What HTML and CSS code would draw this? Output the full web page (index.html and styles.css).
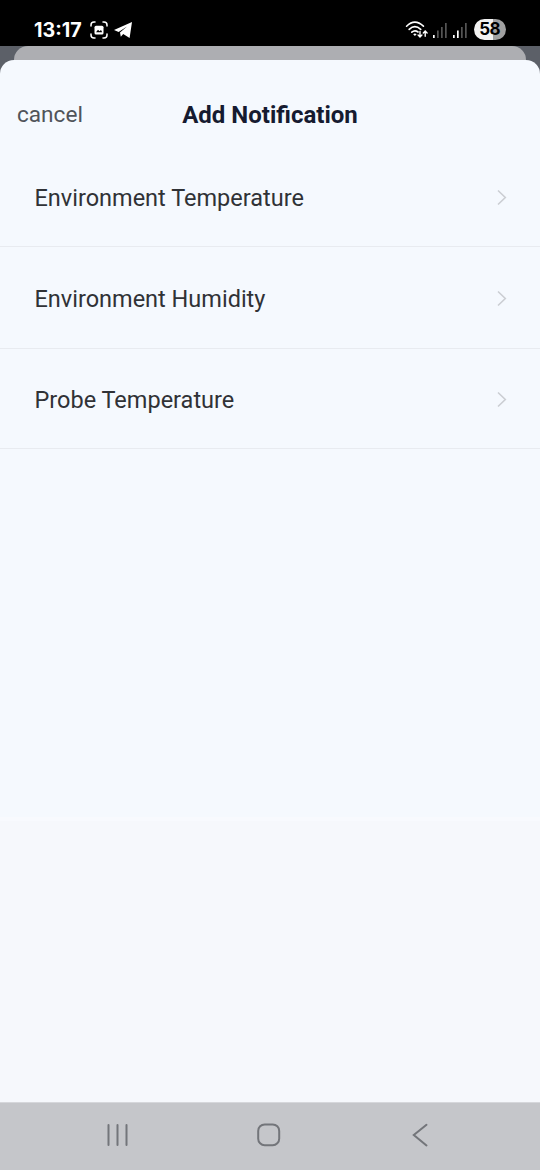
FILE: index.html
```html
<!DOCTYPE html>
<html lang="en">
<head>
    <meta charset="UTF-8">
    <meta name="viewport" content="width=device-width, initial-scale=1.0">
    <title>Add Notification</title>
    <link rel="stylesheet" href="styles.css">
</head>
<body>
    <!-- status bar -->
    <div class="status-bar">
        <span class="clock">13:17</span>
        <svg class="icon-capture" width="18" height="18" viewBox="0 0 18 18" fill="none" stroke="#fff" stroke-width="1.5" stroke-linecap="round">
            <path d="M1 5V4Q1 1 4 1H5M13 1H14Q17 1 17 4V5M17 13V14Q17 17 14 17H13M5 17H4Q1 17 1 14V13"/>
            <rect x="4.5" y="4.8" width="9" height="8.6" rx="1.5" fill="#fff" stroke="none"/>
            <path d="M6 11.2L8 8.8L9.5 10.2L11 8.9L12.2 11.2Z" fill="#000" stroke="none"/>
        </svg>
        <svg class="icon-plane" width="18" height="16" viewBox="0 0 18 16">
            <path d="M0 8.1L18 0L15.6 16L9.2 12.1L6.8 14.8L6 10.6L13 4.6L4.6 10Z" fill="#fff"/>
        </svg>
        <div class="status-right">
            <svg width="24" height="18" viewBox="0 0 24 18" fill="none" stroke="#fff" stroke-width="1.6" stroke-linecap="round">
                <path d="M1.6 5.2Q9.8 -2.8 18.4 5.2M4.2 8.4Q9.8 3 15.7 8.4M6.8 11.2Q9.8 8.5 13 11"/>
                <path d="M8.2 13.2Q9.8 11.8 11.6 13.2L9.9 15Z" fill="#fff" stroke="none"/>
                <path d="M15 10.5V15.7M13.1 14L15 15.9L16.9 14M20.2 15.2V10.2M18.3 12L20.2 10.1L22.1 12" stroke-width="1.4"/>
            </svg>
            <svg class="signal" width="14" height="15" viewBox="0 0 14 15">
                <path d="M0 12h1.7v3H0z" fill="#fff"/>
                <path d="M4 7.5h1.7V15H4zM8 4h1.7v11H8zM12 0h1.7v15H12z" fill="#555"/>
            </svg>
            <svg class="signal second" width="14" height="15" viewBox="0 0 14 15">
                <path d="M0 12h1.7v3H0zM4 7.5h1.7V15H4z" fill="#fff"/>
                <path d="M8 4h1.7v11H8zM12 0h1.7v15H12z" fill="#555"/>
            </svg>
            <span class="battery">58</span>
        </div>
    </div>

    <div class="backdrop">
        <div class="back-card"></div>
        <div class="sheet">
            <div class="sheet-header">
                <span class="cancel">cancel</span>
                <h1 class="title">Add Notification</h1>
            </div>
            <div class="list">
                <div class="row">
                    <span>Environment Temperature</span>
                    <svg class="chevron" width="10" height="17" viewBox="0 0 10 17"><path d="M1 1.5L8.3 8.5L1 15.5"/></svg>
                </div>
                <div class="row tall">
                    <span>Environment Humidity</span>
                    <svg class="chevron" width="10" height="17" viewBox="0 0 10 17"><path d="M1 1.5L8.3 8.5L1 15.5"/></svg>
                </div>
                <div class="row">
                    <span>Probe Temperature</span>
                    <svg class="chevron" width="10" height="17" viewBox="0 0 10 17"><path d="M1 1.5L8.3 8.5L1 15.5"/></svg>
                </div>
            </div>
        </div>
    </div>

    <!-- navigation bar -->
    <div class="nav-bar">
        <svg width="24" height="24" viewBox="0 0 24 24"><path d="M3.5 2V22M12.5 2V22M21.5 2V22"/></svg>
        <svg width="24" height="24" viewBox="0 0 24 24"><rect x="1.2" y="1.4" width="21" height="20.8" rx="6.5"/></svg>
        <svg width="24" height="24" viewBox="0 0 24 24"><path d="M18.5 1.8L5.8 12L18.5 22.4"/></svg>
    </div>
</body>
</html>
```
FILE: styles.css
```css
body {
    margin: 0;
    height: 1170px;
    display: flex;
    flex-direction: column;
    font-family: Roboto, sans-serif;
    overflow: hidden;
}
/* status bar */
.status-bar {
    height: 46px;
    box-sizing: border-box;
    padding: 13px 34px 0;
    display: flex;
    align-items: center;
    background-color: #000;
    color: #fff;
}
.clock {
    width: 48px;
    font-family: Inter, sans-serif;
    font-size: 19.7px;
    font-weight: 700;
    white-space: nowrap;
}
.icon-capture {
    margin-left: 8px;
}
.icon-plane {
    margin-left: 6px;
}
.status-right {
    margin-left: auto;
    display: flex;
    align-items: center;
}
.signal {
    margin: 1px 0 0 4px;
}
.signal.second {
    margin-left: 6px;
}
.battery {
    width: 32px;
    height: 21px;
    margin-left: 7px;
    border-radius: 11px;
    background: linear-gradient(to right, #f2f2f2 58%, #a0a0a0 58%);
    color: #000;
    font-family: Inter, sans-serif;
    font-size: 17px;
    font-weight: 700;
    line-height: 21px;
    letter-spacing: -0.8px;
    text-indent: -1px;
    text-align: center;
}
/* sheet over the previous card */
.backdrop {
    flex: 1;
    display: flex;
    flex-direction: column;
    background-color: #5c6068;
}
.back-card {
    height: 30px;
    margin: 0 14px -16px;
    border-radius: 14px 14px 0 0;
    background-color: #adaeb2;
}
.sheet {
    flex: 1;
    border-radius: 14px 14px 0 0;
    background: linear-gradient(#f5f9fe 757px, #f8fafe 757px, #f8fafe 761px, #f6f8fc 761px);
}
.sheet-header {
    height: 87px;
    box-sizing: border-box;
    padding: 23px 17px 0;
    display: grid;
    grid-template-columns: 1fr auto 1fr;
    align-items: start;
}
.cancel {
    font-size: 22.6px;
    line-height: 64px;
    color: #50545a;
}
.title {
    margin: 0;
    font-size: 24px;
    font-weight: 700;
    line-height: 64px;
    color: #161b30;
}
.row {
    height: 100px;
    box-sizing: border-box;
    padding: 2px 33px 0 34.5px;
    display: flex;
    align-items: center;
    justify-content: space-between;
    border-bottom: 1px solid #e8ebf0;
    font-size: 23.5px;
    color: #303236;
}
.row.tall {
    height: 102px;
}
.chevron {
    margin-bottom: 1px;
    fill: none;
    stroke: #cbced3;
    stroke-width: 1.6;
}
/* navigation bar */
.nav-bar {
    height: 68px;
    padding: 0 108px 4px 105px;
    box-sizing: border-box;
    display: flex;
    align-items: center;
    justify-content: space-between;
    background-color: #c5c6ca;
    border-top: 1px solid #d6d7db;
}
.nav-bar svg {
    fill: none;
    stroke: #73757a;
    stroke-width: 2;
    stroke-linecap: round;
}
```
